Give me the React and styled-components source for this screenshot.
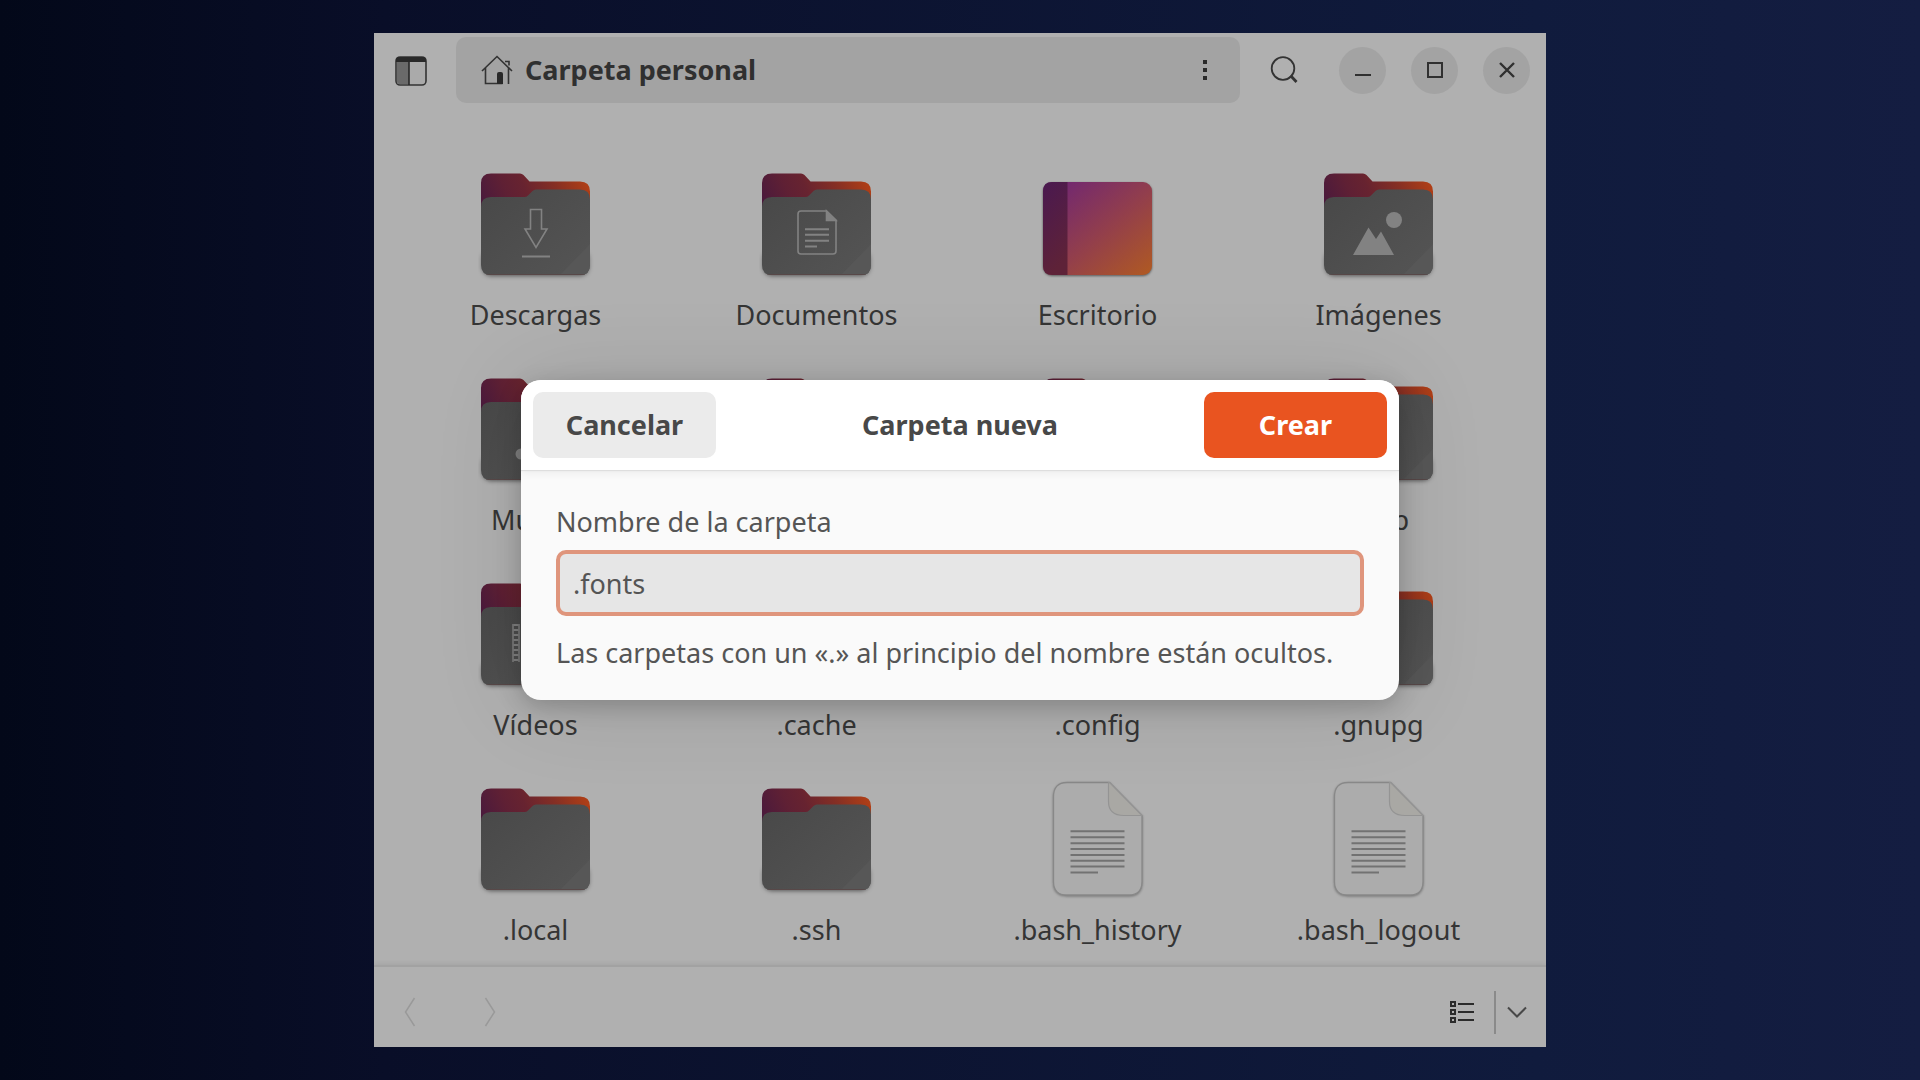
import React, { useState } from 'react'
import styled, { createGlobalStyle } from 'styled-components'

const GlobalStyle = createGlobalStyle`
  * {
    box-sizing: border-box;
  }
  body {
    margin: 0;
  }
  body, button, input {
    font-family: 'Noto Sans', 'Open Sans', sans-serif;
    font-size: 27px;
    line-height: 36px;
  }
`

const files = [
  { name: 'Descargas', kind: 'folder', emblem: 'download' },
  { name: 'Documentos', kind: 'folder', emblem: 'document' },
  { name: 'Escritorio', kind: 'desktop' },
  { name: 'Imágenes', kind: 'folder', emblem: 'picture' },
  { name: 'Música', kind: 'folder', emblem: 'music' },
  { name: '', kind: 'folder' },
  { name: '', kind: 'folder' },
  { name: 'snap', kind: 'folder' },
  { name: 'Vídeos', kind: 'folder', emblem: 'video' },
  { name: '.cache', kind: 'folder' },
  { name: '.config', kind: 'folder' },
  { name: '.gnupg', kind: 'folder' },
  { name: '.local', kind: 'folder' },
  { name: '.ssh', kind: 'folder' },
  { name: '.bash_history', kind: 'text' },
  { name: '.bash_logout', kind: 'text' },
]

function Emblem({ type }) {
  if (type === 'download') {
    return (
      <g fill="none" stroke="#828282" strokeWidth="1.6">
        <path d="M52.5 44.5h11V64H69L58 82.5 47 64h5.5z" />
        <path d="M44 91.5h28" strokeWidth="2" />
      </g>
    )
  }
  if (type === 'document') {
    return (
      <g fill="none" stroke="#828282" strokeWidth="1.6">
        <path d="M67.5 46H42a3 3 0 0 0-3 3v37a3 3 0 0 0 3 3h32a3 3 0 0 0 3-3V55z" />
        <path d="M67.5 46v9.500H77z" fill="#828282" />
        <path d="M46 64.2h24M46 69.8h24M46 75.7h24M46 81.5h12" strokeWidth="2" />
      </g>
    )
  }
  if (type === 'picture') {
    return (
      <g fill="#828282">
        <circle cx="73" cy="55" r="8" />
        <path d="M32 90l15.500-27.500 7.500 11.500 5-7.500L73 90z" />
      </g>
    )
  }
  if (type === 'music') {
    return (
      <g fill="#828282">
        <circle cx="43" cy="84" r="5.500" />
        <circle cx="68" cy="79" r="5.500" />
        <path d="M46 52l27-5v32h-2V56l-23 4v24h-2z" />
      </g>
    )
  }
  if (type === 'video') {
    return (
      <g fill="none" stroke="#828282" strokeWidth="1.5">
        <path d="M35 49v38M41 49v38M75 49v38M81 49v38" />
        <path d="M38 49v38M78 49v38" strokeWidth="5" strokeDasharray="2 3" />
      </g>
    )
  }
  return null
}

function Folder({ emblem }) {
  return (
    <svg width="116" height="120" viewBox="0 0 116 120">
      <defs>
        <linearGradient id="back" x1="0" y1="0.5" x2="1" y2="0.3">
          <stop offset="0" stopColor="#4b1a3c" />
          <stop offset="0.25" stopColor="#5f2034" />
          <stop offset="0.42" stopColor="#672330" />
          <stop offset="0.7" stopColor="#852f24" />
          <stop offset="1" stopColor="#b03f16" />
        </linearGradient>
        <linearGradient id="front" x1="0" y1="0" x2="1" y2="0.85">
          <stop offset="0" stopColor="#484848" />
          <stop offset="1" stopColor="#545454" />
        </linearGradient>
        <clipPath id="front-clip">
          <path d="M3 42q0-10 10-10h33.500q2 0 3.500-1.500l4.500-4.500q1.500-1.500 3.500-1.500h44q10 0 10 10v65.500q0 10-10 10H13q-10 0-10-10z" />
        </clipPath>
      </defs>
      <rect x="4" y="84" width="107" height="26" rx="9" fill="#4f4a4a" filter="drop-shadow(0 1px 2px rgba(0,0,0,0.5))" />
      <path d="M3 18q0-9.500 10-9.500h29q2 0 3.500 1.500l6 6.500H102q10 0 10 10v30H3z" fill="url(#back)" />
      <g clipPath="url(#front-clip)">
        <rect x="3" y="24" width="110" height="87" fill="url(#front)" />
        <path d="M113 78v33H81z" fill="#575757" />
        <path d="M4 109.500h108" stroke="#584848" strokeWidth="1.2" />
      </g>
      <Emblem type={emblem} />
    </svg>
  )
}

function Desktop() {
  return (
    <svg width="116" height="120" viewBox="0 0 116 120">
      <defs>
        <linearGradient id="desk" x1="0" y1="0" x2="1" y2="1">
          <stop offset="0.1" stopColor="#722870" />
          <stop offset="0.55" stopColor="#933f4b" />
          <stop offset="1" stopColor="#b05a22" />
        </linearGradient>
        <linearGradient id="dock" x1="0" y1="0" x2="0.3" y2="1">
          <stop offset="0" stopColor="#4a1950" />
          <stop offset="1" stopColor="#5e2238" />
        </linearGradient>
      </defs>
      <rect x="3" y="17" width="109" height="93" rx="9" fill="url(#desk)" filter="drop-shadow(0 1px 1px rgba(0,0,0,0.5))" />
      <path d="M12 17h15.500v93H12q-9 0-9-9V26q0-9 9-9z" fill="url(#dock)" />
    </svg>
  )
}

function TextFile() {
  return (
    <svg width="116" height="120" viewBox="0 0 116 120">
      <path
        d="M27 2.500h42.500l32.500 33v66q0 13.500-13 13.500H27q-13.500 0-13.500-13.500V17q0-14.500 13.500-14.500z"
        fill="#acacac"
        stroke="#888"
        strokeWidth="1.3"
        filter="drop-shadow(0 1px 1px rgba(0,0,0,0.3))"
      />
      <path d="M69.500 2.500l32.500 33H84q-15.500 0-15.500-14V2.500z" fill="#a9a8a4" stroke="#949494" strokeWidth="1.2" />
      <path
        d="M30.500 51.300h54M30.500 57.300h54M30.500 63.200h54M30.500 69h54M30.500 74.900h54M30.500 80.700h54M30.500 86.600h54M30.500 92.500h27.500"
        stroke="#727272"
        strokeWidth="2"
      />
    </svg>
  )
}

function FileIcon({ kind, emblem }) {
  if (kind === 'desktop') return <Desktop />
  if (kind === 'text') return <TextFile />
  return <Folder emblem={emblem} />
}

export default function App() {
  const [name, setName] = useState('.fonts')

  const onSubmit = (e) => {
    e.preventDefault()
  }

  return (
    <Page>
      <GlobalStyle />
      <Window>
        <Header>
          <IconButton aria-label="Barra lateral">
            <svg width="32" height="32" viewBox="0 -2 32 32">
              <rect x="1" y="1" width="30" height="28" rx="4" fill="#aaa" stroke="#333" strokeWidth="1.6" />
              <path d="M2 6h12v22H4q-2 0-2-2z" fill="#6a6a6a" />
              <path d="M1 6V4q0-3 3-3h24q3 0 3 3v2zM13.200 5h1.600v24h-1.600z" fill="#292929" />
            </svg>
          </IconButton>
          <PathBar>
            <svg width="32" height="32" viewBox="0 0 32 32" fill="none" stroke="#333" strokeWidth="1.6">
              <path d="M1 17L16 2.500 31 17M4.500 14v15.500h17M27.500 14v16M24 7.500h4v4" />
              <path d="M16 30V20q0-2 2-2h2q2 0 2 2v10z" fill="#292929" stroke="none" />
            </svg>
            <PathName>Carpeta personal</PathName>
            <IconButton aria-label="Menú">
              <svg width="4" height="20" viewBox="0 0 4 20" fill="#2a2a2a">
                <path d="M0 0h4v4H0zM0 8h4v4H0zM0 16h4v4H0z" />
              </svg>
            </IconButton>
          </PathBar>
          <IconButton aria-label="Buscar">
            <svg width="28" height="28" viewBox="0 0 28 28" fill="none" stroke="#333">
              <circle cx="13" cy="12.5" r="11.3" strokeWidth="1.8" />
              <path d="M20.500 19.500l6 6.500" strokeWidth="2.8" />
            </svg>
          </IconButton>
          <WindowButtons>
            <RoundButton aria-label="Minimizar">
              <svg width="16" height="16" viewBox="0 0 16 16">
                <path d="M0 13h16" stroke="#303030" strokeWidth="2" />
              </svg>
            </RoundButton>
            <RoundButton aria-label="Maximizar">
              <svg width="16" height="16" viewBox="0 0 16 16">
                <rect x="1" y="1" width="14" height="14" fill="none" stroke="#303030" strokeWidth="2" />
              </svg>
            </RoundButton>
            <RoundButton aria-label="Cerrar">
              <svg width="16" height="16" viewBox="0 0 16 16">
                <path d="M1 1l14 14M15 1L1 15" stroke="#303030" strokeWidth="2.4" />
              </svg>
            </RoundButton>
          </WindowButtons>
        </Header>

        <Files>
          {files.map((file, i) => (
            <File key={i}>
              <FileIcon kind={file.kind} emblem={file.emblem} />
              {file.name && <span>{file.name}</span>}
            </File>
          ))}
        </Files>

        <Footer>
          <NavButtons>
            <IconButton aria-label="Atrás" disabled>
              <svg width="12" height="30" viewBox="0 0 12 30" fill="none" stroke="#999" strokeWidth="1.5">
                <path d="M10.500 1L1.500 15l9 14" />
              </svg>
            </IconButton>
            <IconButton aria-label="Adelante" disabled>
              <svg width="12" height="30" viewBox="0 0 12 30" fill="none" stroke="#999" strokeWidth="1.5">
                <path d="M1.500 1l9 14-9 14" />
              </svg>
            </IconButton>
          </NavButtons>
          <ViewButtons>
            <IconButton aria-label="Vista de lista">
              <svg width="24" height="22" viewBox="0 0 24 22" fill="none" stroke="#2b2b2b" strokeWidth="2">
                <path d="M1 1h4v4H1zM1 9h4v4H1zM1 17h4v4H1zM8 3h16M8 11h16M8 19h16" />
              </svg>
            </IconButton>
            <Divider />
            <IconButton aria-label="Opciones de vista">
              <svg width="20" height="12" viewBox="0 0 20 12" fill="none" stroke="#484848" strokeWidth="2">
                <path d="M1 1.500l9 9 9-9" />
              </svg>
            </IconButton>
          </ViewButtons>
        </Footer>

        <Overlay>
          <Dialog role="dialog" aria-labelledby="dialog-title" onSubmit={onSubmit}>
            <DialogHeader>
              <DialogButton type="button">Cancelar</DialogButton>
              <Title id="dialog-title">Carpeta nueva</Title>
              <DialogButton type="submit" $primary>Crear</DialogButton>
            </DialogHeader>
            <DialogBody>
              <label htmlFor="folder-name">Nombre de la carpeta</label>
              <NameInput
                id="folder-name"
                type="text"
                value={name}
                onChange={(e) => setName(e.target.value)}
              />
              <Hint>Las carpetas con un «.» al principio del nombre están ocultos.</Hint>
            </DialogBody>
          </Dialog>
        </Overlay>
      </Window>
    </Page>
  )
}

const Page = styled.div`
  min-height: 100vh;
  padding: 33px;
  display: flex;
  justify-content: center;
  background: linear-gradient(90deg, #030819 0%, #090e28 20%, #101b3d 80%, #141d41 100%);
`

const Window = styled.main`
  position: relative;
  width: 100%;
  max-width: 1172px;
  display: flex;
  flex-direction: column;
  background: #b0b0b0;
  color: #353535;
`

const Header = styled.header`
  display: flex;
  align-items: center;
  padding: 4px 16px 0 21px;
`

const IconButton = styled.button`
  display: flex;
  align-items: center;
  justify-content: center;
  padding: 0;
  border: none;
  background: none;
`

const PathBar = styled.div`
  flex: 1;
  display: flex;
  align-items: center;
  gap: 12px;
  height: 66px;
  margin: 0 30px 0 29px;
  padding: 0 33px 0 25px;
  border-radius: 10px;
  background: #a3a3a3;
`

const PathName = styled.strong`
  flex: 1;
  color: #303030;
`

const WindowButtons = styled.div`
  display: flex;
  gap: 25px;
  margin-left: 41px;
`

const RoundButton = styled(IconButton)`
  width: 47px;
  height: 47px;
  border-radius: 50%;
  background: #a3a3a3;
`

const Files = styled.section`
  flex: 1;
  display: grid;
  grid-template-columns: repeat(4, 1fr);
  align-content: start;
  row-gap: 37px;
  padding: 62px 27px 16px 21px;
`

const File = styled.div`
  display: flex;
  flex-direction: column;
  align-items: center;
  gap: 12px;

  svg {
    display: block;
  }
`

const Footer = styled.footer`
  display: flex;
  align-items: center;
  justify-content: space-between;
  height: 82px;
  padding: 10px 19px 0 30px;
  border-top: 2px solid #a2a2a2;
  box-shadow: 0 -1px 5px rgba(0, 0, 0, 0.08);
`

const NavButtons = styled.div`
  display: flex;
  gap: 68px;
`

const ViewButtons = styled.div`
  display: flex;
  align-items: center;
`

const Divider = styled.span`
  width: 2px;
  height: 43px;
  margin: 0 11px 0 20px;
  background: #8a8a8a;
`

const Overlay = styled.div`
  position: absolute;
  inset: 0;
  overflow: hidden;
  display: grid;
  place-items: center;
`

const Dialog = styled.form`
  width: 75%;
  max-width: 878px;
  border-radius: 20px;
  overflow: hidden;
  background: #fafafa;
  color: #555;
  box-shadow: 0 6px 24px rgba(0, 0, 0, 0.2), 0 4px 90px rgba(0, 0, 0, 0.12);
`

const DialogHeader = styled.header`
  position: relative;
  display: flex;
  align-items: center;
  justify-content: space-between;
  padding: 12px;
  background: #fff;
  box-shadow: 0 1px 1px #dedede, 0 3px 8px rgba(0, 0, 0, 0.06);
`

const Title = styled.h2`
  margin: 0;
  font-size: 27px;
  color: #484848;
`

const DialogButton = styled.button`
  width: 183px;
  height: 66px;
  border: none;
  border-radius: 10px;
  font-weight: bold;
  background: ${(props) => (props.$primary ? '#e95420' : '#ebebeb')};
  color: ${(props) => (props.$primary ? '#fff' : '#484848')};
`

const DialogBody = styled.div`
  display: flex;
  flex-direction: column;
  padding: 34px 35px 29px;
`

const NameInput = styled.input`
  height: 66px;
  margin: 10px 0 19px;
  padding: 0 13px;
  border: 4px solid #df957c;
  border-radius: 10px;
  outline: none;
  background: #e6e6e6;
  color: #555;
`

const Hint = styled.p`
  margin: 0;
`
